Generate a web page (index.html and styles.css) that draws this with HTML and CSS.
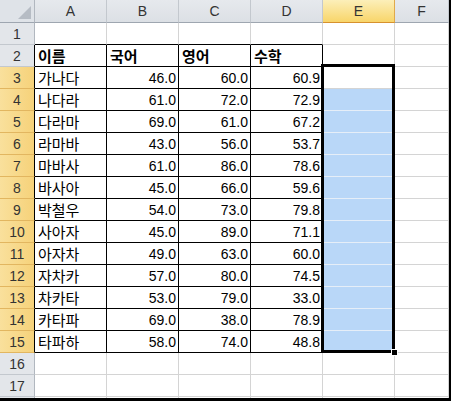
FILE: index.html
```html
<!DOCTYPE html>
<html lang="ko">
<head>
  <meta charset="UTF-8" />
  <title>Sheet1</title>
  <link rel="stylesheet" href="styles.css">
</head>
<body>
  <div class="sheet">
    <div class="grid" id="grid"></div>
    <div class="selection"></div>
    <div class="fill-handle"></div>
  </div>

  <script>
    // 성적 데이터 (A2:D15)
    const rows = [
      ["이름", "국어", "영어", "수학"],
      ["가나다", "46.0", "60.0", "60.9"],
      ["나다라", "61.0", "72.0", "72.9"],
      ["다라마", "69.0", "61.0", "67.2"],
      ["라마바", "43.0", "56.0", "53.7"],
      ["마바사", "61.0", "86.0", "78.6"],
      ["바사아", "45.0", "66.0", "59.6"],
      ["박철우", "54.0", "73.0", "79.8"],
      ["사아자", "45.0", "89.0", "71.1"],
      ["아자차", "49.0", "63.0", "60.0"],
      ["자차카", "57.0", "80.0", "74.5"],
      ["차카타", "53.0", "79.0", "33.0"],
      ["카타파", "69.0", "38.0", "78.9"],
      ["타파하", "58.0", "74.0", "48.8"]
    ];
    const letters = ["A", "B", "C", "D", "E", "F"];

    function cell(cls, text) {
      const div = document.createElement("div");
      div.className = cls;
      if (text) div.textContent = text;
      return div;
    }

    function buildSheet() {
      const grid = document.getElementById("grid");

      grid.appendChild(cell("corner"));
      letters.forEach(l => {
        grid.appendChild(cell(l === "E" ? "col-head active" : "col-head", l));
      });

      for (let r = 1; r <= 18; r++) {
        const data = rows[r - 2];
        let headCls = "row-head";
        if (data) headCls += " edge";
        if (r >= 3 && r <= 15) headCls += " active";
        grid.appendChild(cell(headCls, r <= 17 ? String(r) : ""));

        letters.forEach((l, c) => {
          let cls = "cell";
          let text = "";
          if (data && c < 4) {
            cls += " boxed";
            text = data[c];
            if (r === 2) cls += " title";
            else if (c === 0) cls += " name";
            else cls += " num";
          }
          if (r === 1 && c < 4) cls += " above";
          if (l === "E" && r >= 4 && r <= 15) cls += " picked";
          grid.appendChild(cell(cls, text));
        });
      }
    }

    buildSheet();
  </script>
</body>
</html>
```

FILE: styles.css
```css
* {
  box-sizing: border-box;
  margin: 0;
  padding: 0;
}

body {
  background: #fff;
  font-family: "Liberation Sans", "Noto Sans CJK KR", sans-serif;
  font-size: 14px;
  color: #000;
}

.sheet {
  position: relative;
  width: 451px;
  height: 401px;
  overflow: hidden;
  border-right: 2px solid #000;
  border-bottom: 3px solid #000;
}

.grid {
  display: grid;
  grid-template-columns: 35px repeat(5, 72px) 1fr;
  grid-template-rows: 23px repeat(17, 22px) 22px;
}

.corner,
.col-head,
.row-head,
.cell {
  border-right: 1px solid #d4d4d4;
  border-bottom: 1px solid #d4d4d4;
  display: flex;
  align-items: center;
  white-space: nowrap;
  overflow: hidden;
}

/* headers */
.corner {
  background: #dfe3e8;
  border-right-color: #b1b7bf;
  border-bottom-color: #9ea6b0;
  position: relative;
}

.corner::after {
  content: "";
  position: absolute;
  right: 3px;
  bottom: 3px;
  width: 0;
  height: 0;
  border-left: 13px solid transparent;
  border-bottom: 13px solid #b6bcc4;
}

.col-head {
  justify-content: center;
  background: linear-gradient(#e6e9ed, #dce0e5);
  border-right-color: #c3c8ce;
  border-bottom-color: #9ea6b0;
  color: #333;
}

.col-head.active {
  background: linear-gradient(#fcefb9, #f8d56a);
  border-right-color: #e0a94a;
  border-bottom-color: #d7912e;
}

.row-head {
  justify-content: center;
  background: #e3e6ea;
  border-right-color: #b1b7bf;
  border-bottom-color: #c3c8ce;
  color: #333;
}

.row-head.active {
  background: linear-gradient(to right, #f9e09c, #f6d27a);
  border-bottom-color: #e2b660;
}

.row-head.edge {
  border-right-color: #000;
}

/* cells */
.cell {
  padding: 0 2px 0 3px;
}

.cell.boxed {
  border-right-color: #000;
  border-bottom-color: #000;
}

.cell.above {
  border-bottom-color: #000;
}

.cell.title {
  font-family: "Noto Sans CJK KR", sans-serif;
  font-size: 15px;
  font-weight: bold;
}

.cell.name {
  font-family: "Noto Sans CJK KR", sans-serif;
  font-size: 15px;
}

.cell.num {
  justify-content: flex-end;
}

.cell.picked {
  background: #b9d7f8;
  border-bottom-color: #e6eef8;
}

/* active range E3:E15 */
.selection {
  position: absolute;
  left: 321px;
  top: 64px;
  width: 74px;
  height: 289px;
  border: 3px solid #000;
}

.fill-handle {
  position: absolute;
  left: 391px;
  top: 349px;
  width: 7px;
  height: 7px;
  background: #000;
  border: 1px solid #fff;
}
```
